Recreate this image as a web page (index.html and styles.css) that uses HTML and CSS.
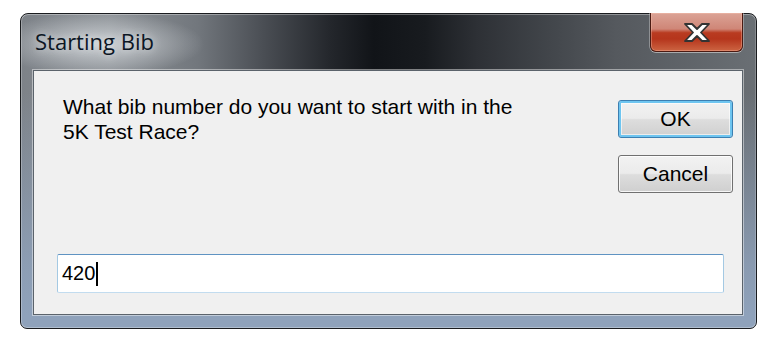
FILE: index.html
```html
<!DOCTYPE html>
<html>
<head>
<meta charset="utf-8">
<link rel="stylesheet" href="styles.css">
</head>
<body>
<div class="window">
  <div class="titlebar">
    <div class="title">Starting Bib</div>
    <div class="close">
      <svg width="26" height="19" viewBox="0 0 26 19">
        <polygon points="1,1 8,1 13,6 18,1 25,1 17,9.5 25,18 18,18 13,13 8,18 1,18 9,9.5" fill="#ffffff" stroke="#333333" stroke-width="1.8" stroke-linejoin="round"/>
      </svg>
    </div>
  </div>
  <div class="client">
    <div class="toprow">
      <div class="message">What bib number do you want to start with in the<br>5K Test Race?</div>
      <div class="buttons">
        <div class="btn btn-default">OK</div>
        <div class="btn">Cancel</div>
      </div>
    </div>
    <div class="textbox"><span class="value">420</span><span class="caret"></span></div>
  </div>
</div>
</body>
</html>
```

FILE: styles.css
```css
html, body {
  margin: 0;
  padding: 0;
  background: #ffffff;
}
body {
  padding: 13px 0 0 20px;
}
.window {
  box-sizing: border-box;
  width: 737px;
  height: 316px;
  border: 1px solid #1a1c1f;
  border-radius: 8px 8px 7px 7px;
  padding: 0 13px 13px 12px;
  display: flex;
  flex-direction: column;
  background:
    radial-gradient(ellipse 105px 32px at 78px 30px, rgba(210,214,218,0.9), rgba(210,214,218,0) 100%),
    linear-gradient(to bottom, rgba(143,162,187,0) 25%, rgba(143,162,187,0.85) 80%, #8fa2bb 96%),
    linear-gradient(to right, #7d8288 0%, #8c9196 12%, #72777d 24%, #4a4e54 33%, #24272c 42%, #111418 48%, #181b1f 55%, #2d3035 62%, #44484d 73%, #55595e 81%, #6a6f74 100%);
  box-shadow: inset 0 1px 0 rgba(255,255,255,0.35), inset 1px 0 0 rgba(255,255,255,0.25), inset -1px 0 0 rgba(255,255,255,0.2), inset 0 -1px 0 rgba(255,255,255,0.3);
}
.titlebar {
  height: 56px;
  display: flex;
  justify-content: space-between;
  align-items: flex-start;
}
.title {
  font-family: "Open Sans", "Noto Sans", sans-serif;
  font-size: 22px;
  line-height: 30px;
  color: #0c1624;
  padding: 12px 0 0 2px;
  text-shadow: 0 0 8px rgba(235,238,240,0.9);
}
.close {
  box-sizing: border-box;
  width: 93px;
  height: 39px;
  margin-top: -1px;
  border: 1px solid #4a1a12;
  border-top: none;
  border-radius: 0 0 6px 6px;
  background: linear-gradient(to bottom, #dba396 0%, #cf8677 42%, #b93b21 52%, #b5351c 68%, #cc6442 100%);
  box-shadow: 0 1px 0 rgba(220,220,220,0.6), 1px 0 0 rgba(220,220,220,0.4), -1px 0 0 rgba(220,220,220,0.4), inset 0 0 0 1px rgba(255,200,180,0.35);
  display: flex;
  align-items: center;
  justify-content: center;
}
.close svg {
  display: block;
  margin-top: 1px;
}
.client {
  flex: 1;
  background: #f0f0f0;
  border: 1px solid #5b636b;
  box-shadow: 0 0 0 1px rgba(255,255,255,0.45);
  display: flex;
  flex-direction: column;
  font-family: "Liberation Sans", Arial, sans-serif;
  color: #000;
}
.toprow {
  display: flex;
  justify-content: space-between;
  align-items: flex-start;
}
.message {
  font-size: 21px;
  line-height: 25px;
  margin: 23px 0 0 29px;
}
.buttons {
  display: flex;
  flex-direction: column;
  gap: 17px;
  margin: 29px 9px 0 0;
}
.btn {
  box-sizing: border-box;
  width: 115px;
  height: 38px;
  border: 1px solid #707070;
  border-radius: 3px;
  background: linear-gradient(to bottom, #f2f2f2 0%, #ebebeb 48%, #dddddd 52%, #cfcfcf 100%);
  box-shadow: inset 0 0 0 1px rgba(255,255,255,0.8);
  font-size: 21px;
  line-height: 36px;
  text-align: center;
}
.btn-default {
  border: 1px solid #3c7fb1;
  box-shadow: inset 0 0 0 2px #6ec5f0, inset 0 0 0 3px rgba(255,255,255,0.6);
}
.textbox {
  box-sizing: border-box;
  width: 667px;
  height: 39px;
  margin: auto 0 21px 23px;
  background: #ffffff;
  border: 1px solid #a4c9e3;
  border-top-color: #5f93c2;
  border-bottom-color: #c2dcef;
  border-radius: 2px;
  padding-left: 4px;
  display: flex;
  align-items: center;
  font-size: 20px;
  line-height: 37px;
}
.caret {
  display: inline-block;
  width: 2px;
  height: 24px;
  background: #000;
  margin-left: 1px;
}
```
